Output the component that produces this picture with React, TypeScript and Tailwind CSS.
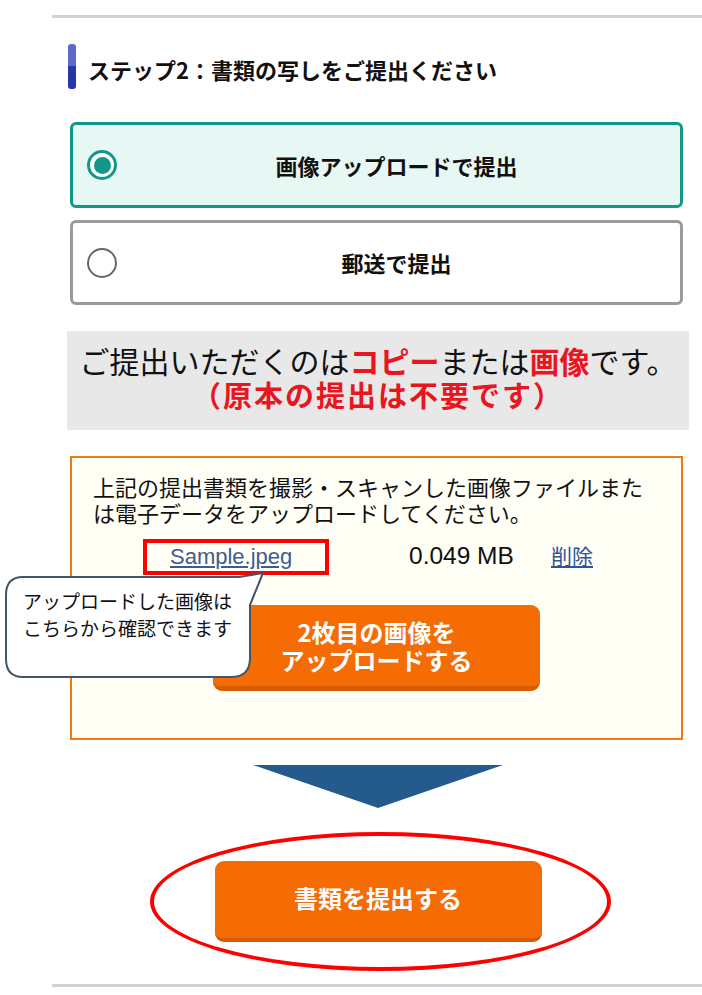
import React from "react";

const jp = "font-['Noto_Sans_CJK_JP',sans-serif]";

function Radio({ checked }: { checked: boolean }) {
  return checked ? (
    <span className="ml-[14px] flex h-[30px] w-[30px] shrink-0 items-center justify-center rounded-full border-[3px] border-[#13978a] bg-white">
      <span className="h-[17px] w-[17px] rounded-full bg-[#13978a]" />
    </span>
  ) : (
    <span className="ml-[14px] h-[30px] w-[30px] shrink-0 rounded-full border-[2px] border-[#666] bg-white" />
  );
}

function Option({ label, checked }: { label: string; checked: boolean }) {
  return (
    <div
      className={
        checked
          ? "ml-[3px] flex h-[86px] w-[613px] items-center rounded-[6px] border-[3px] border-[#13978a] bg-[#e7f7f4]"
          : "ml-[3px] flex h-[85px] w-[613px] items-center rounded-[6px] border-[3px] border-[#9a9a9a] bg-white"
      }
    >
      <Radio checked={checked} />
      <span className="flex-1 pr-[4px] text-center text-[22px] font-bold text-[#111]">{label}</span>
    </div>
  );
}

function Callout() {
  return (
    <div className="absolute left-[-67px] top-[109px] h-[112px] w-[265px]">
      <svg width="265" height="112" viewBox="0 0 265 112" className="absolute left-0 top-0">
        <path
          d="M 18 10 H 234 L 258 6 L 245 38 V 91 Q 245 110 226 110 H 18 Q 1 110 1 92 V 28 Q 1 10 18 10 Z"
          fill="#fff"
          stroke="#44546a"
          strokeWidth="2"
          strokeLinejoin="round"
        />
      </svg>
      <div className="relative pl-[18px] pt-[20px] text-[19px] leading-[27px] text-[#111]">
        <div>アップロードした画像は</div>
        <div>こちらから確認できます</div>
      </div>
    </div>
  );
}

export default function App() {
  return (
    <div className={`h-[995px] w-[702px] overflow-hidden bg-white ${jp}`}>
      <div className="ml-[52px] mt-[15px] border-t-[3px] border-b-[3px] border-[#d2d2d2] pl-[15px] pb-[42px]">
        <div className="mt-[26px] flex h-[45px] items-center">
          <div className="ml-[1px] flex h-[45px] w-[8px] flex-col overflow-hidden rounded-[3px]">
            <div className="h-[22px] bg-[#5e69c3]" />
            <div className="flex-1 bg-[#2636a6]" />
          </div>
          <h2 className="ml-[12px] mt-[6px] text-[22px] font-bold text-[#111]">ステップ2：書類の写しをご提出ください</h2>
        </div>

        <div className="mt-[33px] flex flex-col gap-[12px]">
          <Option label="画像アップロードで提出" checked />
          <Option label="郵送で提出" checked={false} />
        </div>

        <div className="mt-[26px] flex h-[99px] w-[622px] flex-col items-center bg-[#e8e8e8] pt-[12px]">
          <p className="text-[30px] leading-[34px] text-[#111]">
            ご提出いただくのは<span className="font-bold text-[#e9151f]">コピー</span>または
            <span className="font-bold text-[#e9151f]">画像</span>です。
          </p>
          <p className="text-[29px] font-bold leading-[34px] tracking-[2px] text-[#e9151f]">（原本の提出は不要です）</p>
        </div>

        <div className="relative ml-[3px] mt-[26px] h-[284px] w-[613px] border-[2px] border-[#f07a12] bg-[#fffff6] px-[21px] pt-[15px]">
          <p className="text-[22px] leading-[26px] text-[#111]">
            上記の提出書類を撮影・スキャンした画像ファイルまたは電子データをアップロードしてください。
          </p>
          <div className="mt-[14px] flex h-[34px] items-center pl-[77px]">
            <a className="w-[239px] font-['Liberation_Sans',sans-serif] text-[22px] text-[#3e5d8c] underline">Sample.jpeg</a>
            <span className="w-[142px] font-['Liberation_Sans',sans-serif] text-[24.5px] text-[#111]">0.049 MB</span>
            <a className="text-[21px] text-[#2f5496] underline">削除</a>
          </div>
          <div className="absolute left-[71px] top-[81px] h-[36px] w-[186px] border-[4px] border-[#ff0000]" />
          <button className="mx-auto mt-[32px] flex h-[86px] w-[327px] flex-col items-center justify-center rounded-[9px] border-b-[5px] border-[#d95b00] bg-[#f56b04] text-[24px] font-bold leading-[28px] text-white">
            <span>2枚目の画像を</span>
            <span>アップロードする</span>
          </button>
          <Callout />
        </div>

        <div className="relative w-[622px] pt-[25px]">
          <svg width="250" height="44" viewBox="0 0 250 44" className="mx-auto block">
            <polygon points="0,0 250,0 125,43" fill="#245a8c" />
          </svg>
          <button className="mx-auto mt-[52px] flex h-[81px] w-[327px] items-center justify-center rounded-[9px] border-b-[4px] border-[#d95b00] bg-[#f56b04] pb-[3px] text-[24px] font-bold text-white">
            書類を提出する
          </button>
          <div className="absolute left-[83px] top-[92px] h-[139px] w-[461px] rounded-[50%] border-[4px] border-[#ff0000]" />
        </div>
      </div>
    </div>
  );
}
